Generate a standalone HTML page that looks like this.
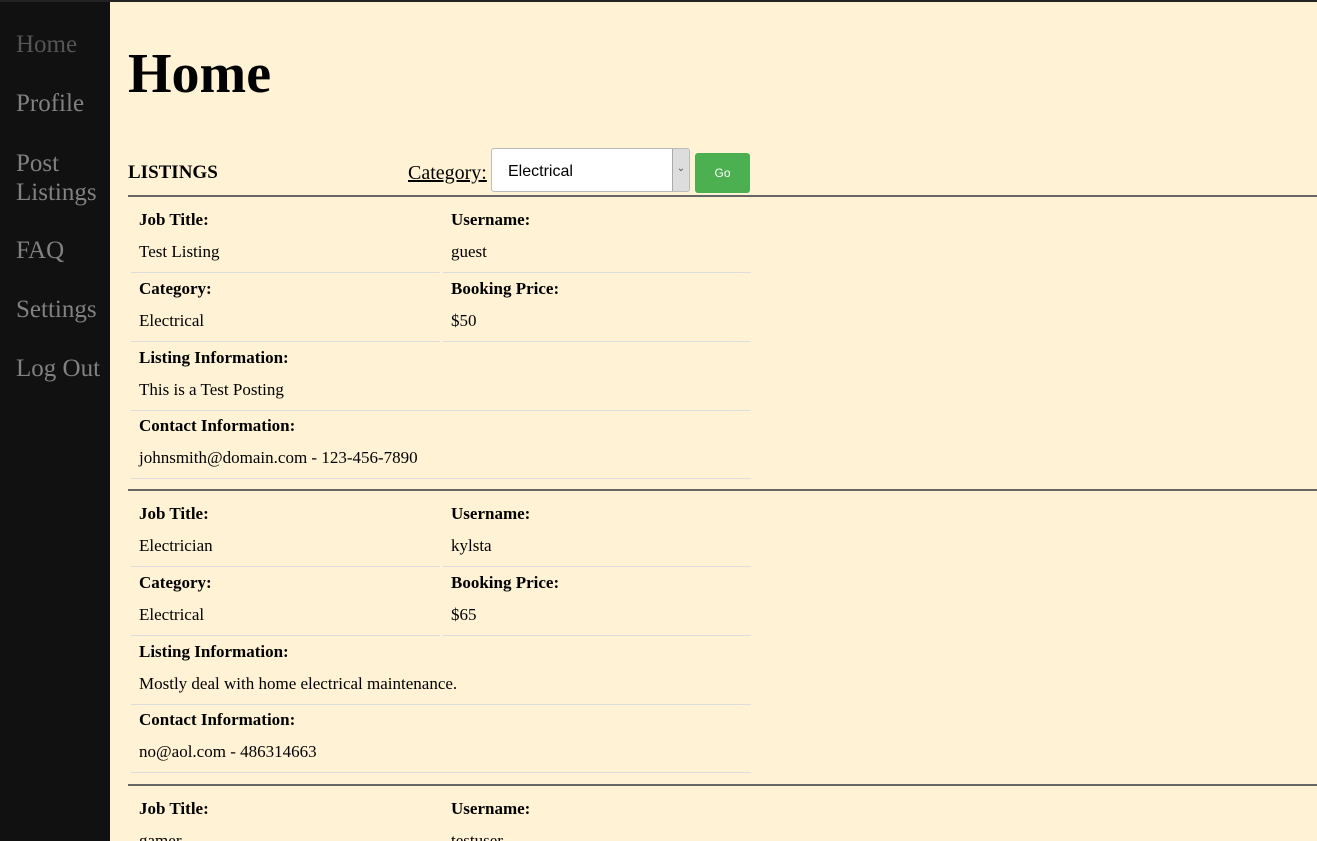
<!DOCTYPE html>
<html style="height:841px;overflow:hidden"><head><style>
*{margin:0;padding:0;box-sizing:border-box}
html,body{width:1317px;height:841px;overflow:hidden}
body{background:#fff2d5;font-family:"Liberation Serif",serif;position:relative}
.top{position:absolute;left:0;top:0;width:1317px;height:2px;background:#222}
.side{position:absolute;left:0;top:0;width:110px;height:841px;background:#111}
.side a{position:absolute;left:16px;font-size:25px;color:#818181;text-decoration:none;line-height:29px}
h1{position:absolute;left:128px;top:41px;font-size:56px;line-height:66px;font-weight:bold}
.abs{position:absolute}
.blk{position:absolute;left:128px;width:1189px;height:294px;border-top:2px solid #666}
.row{position:absolute;left:0;width:623px;height:69px}
.cell{position:absolute;top:0;height:68px;border-bottom:1px solid #ddd}
.c1{left:3px;width:309px}.c2{left:315px;width:308px}.cf{left:3px;width:620px}
.l{position:absolute;left:8px;top:5px;font-weight:bold;font-size:17px;line-height:20px;white-space:nowrap}
.v{position:absolute;left:8px;top:37px;font-size:17px;line-height:20px;white-space:nowrap}
</style></head><body>
<div class="side">
<a style="top:30px;color:#555">Home</a>
<a style="top:89px">Profile</a>
<a style="top:149px">Post<br>Listings</a>
<a style="top:236px">FAQ</a>
<a style="top:295px">Settings</a>
<a style="top:354px">Log Out</a>
</div>
<div class="top"></div>
<h1>Home</h1>
<div class="abs" style="left:128px;top:162px;font-size:19px;font-weight:bold;line-height:22px">LISTINGS</div>
<div class="abs" style="left:408px;top:162px;font-size:20px;text-decoration:underline;line-height:22px">Category:</div>
<div class="abs" style="left:491px;top:148px;width:199px;height:44px;background:#fff;border:1px solid #bbb;border-radius:3px;overflow:hidden">
<div class="abs" style="left:16px;top:13px;font-family:'Liberation Sans',sans-serif;font-size:16px;line-height:20px">Electrical</div>
<div class="abs" style="right:0;top:0;width:17px;height:42px;background:#ddd;border-left:1px solid #aaa;font-family:'Liberation Sans',sans-serif;font-size:10px;color:#555;text-align:center;line-height:40px">&#8964;</div>
</div>
<div class="abs" style="left:695px;top:153px;width:55px;height:40px;background:#4caf50;border-radius:3px;color:#fff;font-family:'Liberation Sans',sans-serif;font-size:12px;text-align:center;line-height:40px">Go</div>

<div class="blk" style="top:195px">
<div class="row" style="top:8px"><div class="cell c1"><div class="l">Job Title:</div><div class="v">Test Listing</div></div><div class="cell c2"><div class="l">Username:</div><div class="v">guest</div></div></div>
<div class="row" style="top:77px"><div class="cell c1"><div class="l">Category:</div><div class="v">Electrical</div></div><div class="cell c2"><div class="l">Booking Price:</div><div class="v">$50</div></div></div>
<div class="row" style="top:146px"><div class="cell cf"><div class="l">Listing Information:</div><div class="v">This is a Test Posting</div></div></div>
<div class="row" style="top:214px"><div class="cell cf"><div class="l">Contact Information:</div><div class="v">johnsmith@domain.com - 123-456-7890</div></div></div>
</div>

<div class="blk" style="top:489px">
<div class="row" style="top:8px"><div class="cell c1"><div class="l">Job Title:</div><div class="v">Electrician</div></div><div class="cell c2"><div class="l">Username:</div><div class="v">kylsta</div></div></div>
<div class="row" style="top:77px"><div class="cell c1"><div class="l">Category:</div><div class="v">Electrical</div></div><div class="cell c2"><div class="l">Booking Price:</div><div class="v">$65</div></div></div>
<div class="row" style="top:146px"><div class="cell cf"><div class="l">Listing Information:</div><div class="v">Mostly deal with home electrical maintenance.</div></div></div>
<div class="row" style="top:214px"><div class="cell cf"><div class="l">Contact Information:</div><div class="v">no@aol.com - 486314663</div></div></div>
</div>

<div class="blk" style="top:784px;height:57px;overflow:hidden">
<div class="row" style="top:8px"><div class="cell c1"><div class="l">Job Title:</div><div class="v">gamer</div></div><div class="cell c2"><div class="l">Username:</div><div class="v">testuser</div></div></div>
</div>
</body></html>
